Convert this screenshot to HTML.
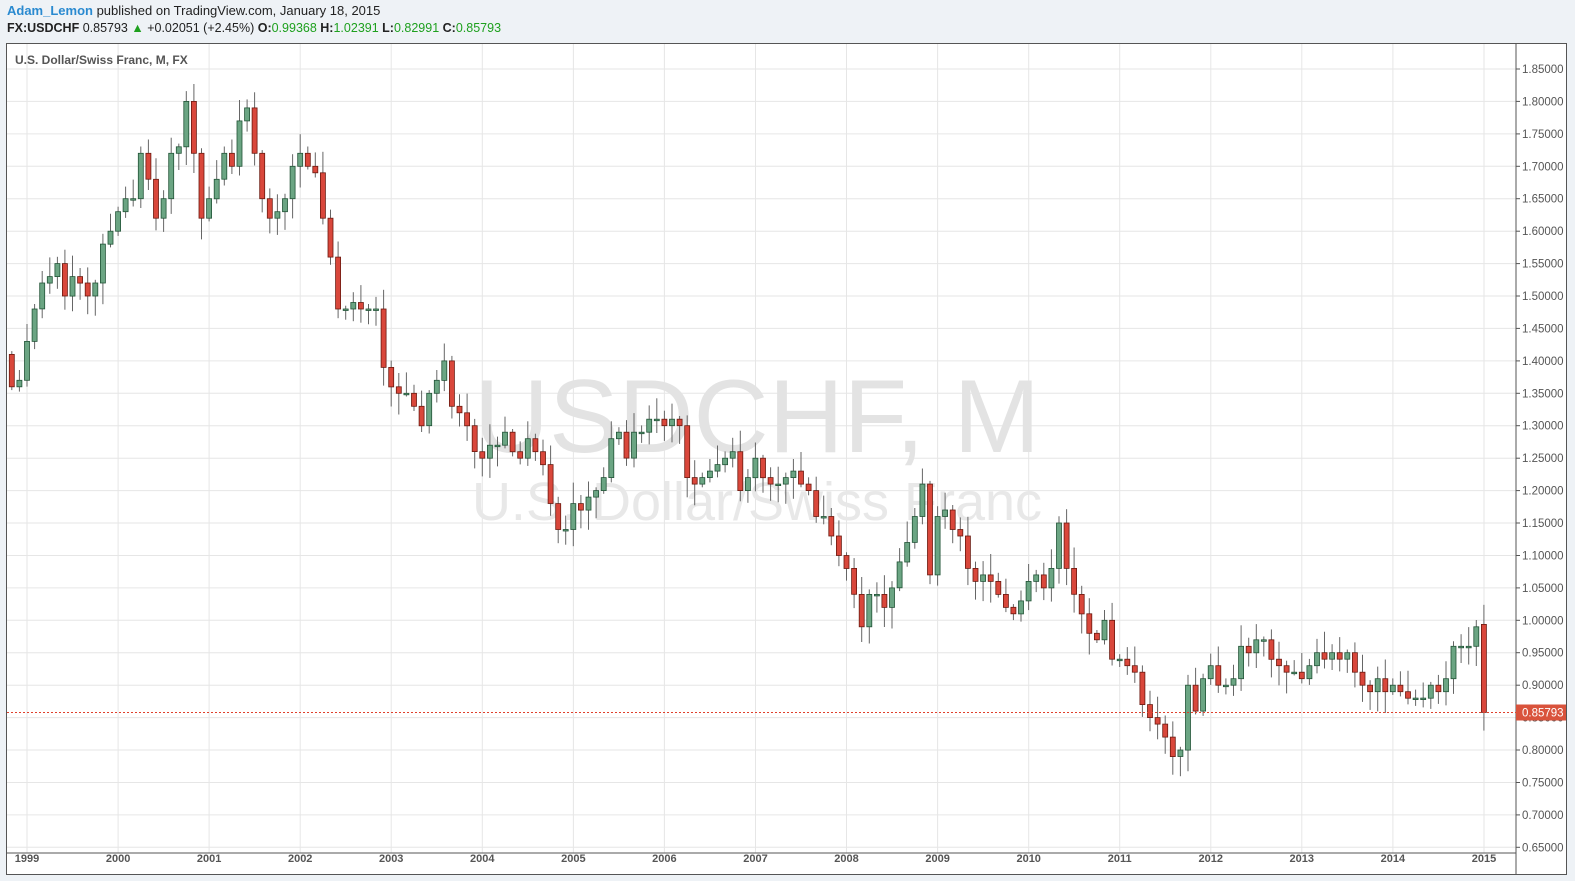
<!DOCTYPE html>
<html><head><meta charset="utf-8"><style>
html,body{margin:0;padding:0;background:#eef2f6;width:1575px;height:881px;overflow:hidden;font-family:"Liberation Sans",sans-serif}
#h1{position:absolute;left:7px;top:3px;font-size:13px;color:#222}
#h1 b{color:#2a8ad0;font-weight:bold}
#h2{position:absolute;left:7px;top:21px;font-size:12.5px;color:#222}
#h2 .g{color:#1ea01e}
#box{position:absolute;left:6px;top:43px;width:1561px;height:832px;background:#fff;border:1px solid #555;box-sizing:border-box}
svg{position:absolute;left:0;top:0}
</style></head><body>
<div id="h1"><b>Adam_Lemon</b> published on TradingView.com, January 18, 2015</div>
<div id="h2"><b>FX:USDCHF</b> 0.85793 <span class="g">▲</span> +0.02051 (+2.45%) <b>O:</b><span class="g">0.99368</span> <b>H:</b><span class="g">1.02391</span> <b>L:</b><span class="g">0.82991</span> <b>C:</b><span class="g">0.85793</span></div>
<div id="box"></div>
<svg id="s" width="1575" height="881" xmlns="http://www.w3.org/2000/svg"></svg>
<script>
var s=document.getElementById('s');var out='';
function Y(p){return 69+(1.85-p)*648.6;}
for(var i=0;i<=24;i++){var p=0.65+i*0.05,y=Y(p).toFixed(1);out+='<line x1="7" x2="1516" y1="'+y+'" y2="'+y+'" stroke="#e6e6e6"/>';}
for(var yr=1999;yr<=2015;yr++){var x=27+(yr-1999)*91.06;out+='<line x1="'+x.toFixed(1)+'" x2="'+x.toFixed(1)+'" y1="44" y2="853" stroke="#e6e6e6"/>';
out+='<text x="'+x.toFixed(1)+'" y="862" font-size="11" font-weight="bold" fill="#555" text-anchor="middle" font-family="Liberation Sans">'+yr+'</text>';}
out+='<line x1="1516" x2="1516" y1="44" y2="874" stroke="#555"/><line x1="7" x2="1516" y1="853" y2="853" stroke="#555"/>';
for(var i=0;i<=24;i++){var p=0.65+i*0.05,y=Y(p);out+='<line x1="1516" x2="1520" y1="'+y.toFixed(1)+'" y2="'+y.toFixed(1)+'" stroke="#555"/><text x="1522" y="'+(y+4).toFixed(1)+'" font-size="11.5" fill="#555" font-family="Liberation Sans">'+p.toFixed(5)+'</text>';}
out+='<text x="757" y="452" font-size="104" fill="#e3e3e3" text-anchor="middle" font-family="Liberation Sans">USDCHF, M</text>';
out+='<text x="757" y="520" font-size="54" fill="#e8e8e8" text-anchor="middle" font-family="Liberation Sans">U.S. Dollar/Swiss Franc</text>';
out+='<text x="15" y="64" font-size="12" font-weight="bold" fill="#555" font-family="Liberation Sans">U.S. Dollar/Swiss Franc, M, FX</text>';
var c=[1.36,1.37,
1.43,1.48,1.52,1.53,1.55,1.50,1.53,1.52,1.50,1.52,1.58,1.60,
1.63,1.65,1.65,1.72,1.68,1.62,1.65,1.72,1.73,1.80,1.72,1.62,
1.65,1.68,1.72,1.70,1.77,1.79,1.72,1.65,1.62,1.63,1.65,1.70,
1.72,1.70,1.69,1.62,1.56,1.48,1.48,1.49,1.48,1.48,1.48,1.39,
1.36,1.35,1.35,1.33,1.30,1.35,1.37,1.40,1.33,1.32,1.30,1.26,
1.25,1.27,1.27,1.29,1.26,1.25,1.28,1.26,1.24,1.18,1.14,1.14,
1.18,1.17,1.19,1.20,1.22,1.28,1.29,1.25,1.29,1.29,1.31,1.31,
1.30,1.31,1.30,1.22,1.21,1.22,1.23,1.24,1.25,1.26,1.20,1.22,
1.25,1.22,1.21,1.21,1.22,1.23,1.21,1.20,1.16,1.16,1.13,1.10,
1.08,1.04,0.99,1.04,1.04,1.02,1.05,1.09,1.12,1.16,1.21,1.07,
1.16,1.17,1.14,1.13,1.08,1.06,1.07,1.06,1.04,1.02,1.01,1.03,
1.06,1.07,1.05,1.08,1.15,1.08,1.04,1.01,0.98,0.97,1.00,0.94,
0.94,0.93,0.92,0.87,0.85,0.84,0.82,0.79,0.80,0.90,0.86,0.91,
0.93,0.90,0.90,0.91,0.96,0.95,0.97,0.97,0.94,0.93,0.92,0.92,
0.91,0.93,0.95,0.94,0.95,0.94,0.95,0.92,0.90,0.89,0.91,0.89,
0.90,0.89,0.88,0.88,0.88,0.90,0.89,0.91,0.96,0.96,0.96,0.99,
0.85793];
var prev=1.41;
for(var i=0;i<c.length;i++){var m=i-2;var x=27+m*7.588;var o=prev,cl=c[i];
if(i==c.length-1){o=0.99368;}
var r1=((i*37)%11)/11*0.03+0.005,r2=((i*53)%13)/13*0.03+0.005;
var hi=Math.max(o,cl)+r1,lo=Math.min(o,cl)-r2;
if(i==c.length-1){hi=1.02391;lo=0.82991;}
out+='<line x1="'+x.toFixed(1)+'" x2="'+x.toFixed(1)+'" y1="'+Y(hi).toFixed(1)+'" y2="'+Y(lo).toFixed(1)+'" stroke="#666"/>';
var up=cl>=o;var t=Y(Math.max(o,cl)),b=Y(Math.min(o,cl));if(b-t<1.5)b=t+1.5;
out+='<rect x="'+(x-2.5).toFixed(1)+'" y="'+t.toFixed(1)+'" width="5" height="'+(b-t).toFixed(1)+'" fill="'+(up?'#6ba583':'#d9473b')+'" stroke="'+(up?'#225437':'#6b1a10')+'" stroke-width="0.8"/>';
prev=cl;}
var ly=Y(0.85793);
out+='<line x1="7" x2="1516" y1="'+ly.toFixed(1)+'" y2="'+ly.toFixed(1)+'" stroke="#e0402c" stroke-dasharray="2,2"/>';
out+='<rect x="1516" y="'+(ly-8).toFixed(1)+'" width="50" height="16" fill="#d9533c"/><text x="1522" y="'+(ly+4).toFixed(1)+'" font-size="11.5" fill="#fff" font-family="Liberation Sans">0.85793</text>';
s.innerHTML=out;
</script>
</body></html>
